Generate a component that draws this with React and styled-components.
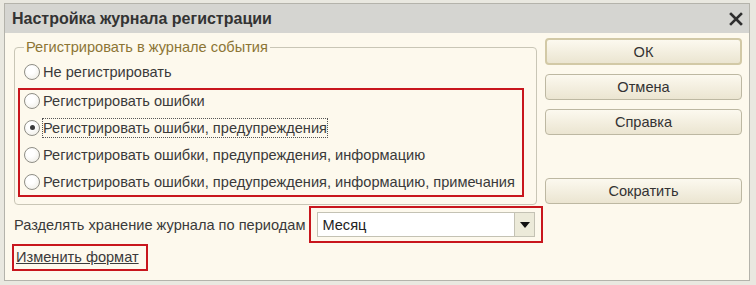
import React, { useState } from 'react';
import styled, { createGlobalStyle } from 'styled-components';

const GlobalStyle = createGlobalStyle`
  html, body {
    margin: 0;
    padding: 0;
    background: #e9e8e0;
  }
  body {
    font-family: "Liberation Sans", Arial, sans-serif;
  }
`;

const Frame = styled.div`
  width: 756px;
  height: 285px;
  box-sizing: border-box;
  padding: 3px 6px 4px 4px;
  background: #e9e8e0;
`;

const Win = styled.div`
  height: 100%;
  box-sizing: border-box;
  border: 1px solid #b4b3ab;
  background: #fdf9ed;
  display: flex;
  flex-direction: column;
`;

const TitleBar = styled.div`
  height: 29px;
  flex: none;
  display: flex;
  align-items: center;
  justify-content: space-between;
  padding: 0 6px 0 7px;
  background: #d5d5d1;
  color: #333;
  font-size: 16px;
  font-weight: bold;
`;

const CloseBtn = styled.div`
  width: 14px;
  height: 14px;
  display: flex;
`;

const Content = styled.div`
  flex: 1;
  display: flex;
  padding: 6px 0 0 9px;
  gap: 8px;
`;

const LeftCol = styled.div`
  width: 523px;
  display: flex;
  flex-direction: column;
  align-items: flex-start;
`;

const Group = styled.fieldset`
  align-self: stretch;
  margin: 0;
  padding: 0 12px 7px 5px;
  border: 1px solid #c9c6b6;
  border-radius: 4px;
`;

const Legend = styled.legend`
  margin-left: 4px;
  padding: 0 2px;
  color: #8c7535;
  font-size: 14.6px;
`;

const Highlight = styled.div`
  border: 2px solid #c8161d;
  margin: ${p => p.$margin || '0'};
  padding: ${p => p.$pad || '0'};
`;

const RowList = styled.div`
  margin-top: -3px;
`;

const Row = styled.label`
  height: ${p => p.$h || 27}px;
  margin-top: ${p => p.$top || 0}px;
  display: flex;
  align-items: center;
  padding-left: 4px;
  gap: 2px;
  color: #3a3a3a;
  font-size: 14.6px;
  white-space: nowrap;
  cursor: default;
`;

const Circle = styled.span`
  width: 14px;
  height: 14px;
  border-radius: 50%;
  border: 1px solid #8f8e86;
  background: radial-gradient(circle at 40% 35%, #ffffff 30%, #ebe9e0 100%);
  display: flex;
  align-items: center;
  justify-content: center;
  flex: none;
  &::after {
    content: '';
    width: 5px;
    height: 5px;
    border-radius: 50%;
    background: ${p => (p.$on ? '#3a3a3a' : 'transparent')};
  }
`;

const RowText = styled.span`
  padding: 1px 0;
  border: 1px dotted ${p => (p.$focus ? '#555' : 'transparent')};
`;

const PeriodRow = styled.div`
  display: flex;
  align-items: center;
  margin-top: 1px;
  gap: 4px;
  color: #3a3a3a;
  font-size: 14.6px;
  white-space: nowrap;
`;

const Select = styled.div`
  width: 218px;
  height: 25px;
  box-sizing: border-box;
  border: 1px solid #c4c2b4;
  background: #fff;
  display: flex;
  align-items: center;
  color: #222;
  font-size: 14.6px;
`;

const SelectValue = styled.span`
  flex: 1;
  padding-left: 4px;
`;

const DropBtn = styled.span`
  width: 19px;
  height: 100%;
  border-left: 1px solid #c4c2b4;
  background: #ecead9;
  display: flex;
  align-items: center;
  justify-content: center;
`;

const Link = styled.a`
  display: block;
  line-height: 17px;
  color: #3a3a3a;
  font-size: 14.6px;
  text-decoration: underline;
`;

const RightCol = styled.div`
  width: 197px;
  margin-top: -1px;
  display: flex;
  flex-direction: column;
  gap: 9px;
`;

const Button = styled.button`
  height: ${p => (p.$default ? 27 : 26)}px;
  box-sizing: border-box;
  border: ${p => (p.$default ? '2px solid #d2c9a6' : '1px solid #bdb8a2')};
  border-radius: 4px;
  background: linear-gradient(#fcf9ef, #ebe5d1);
  color: #333;
  font-family: "Liberation Sans", Arial, sans-serif;
  font-size: 14.6px;
  margin-top: ${p => p.$gapTop || 0}px;
  padding: 0;
`;

const options = [
  'Не регистрировать',
  'Регистрировать ошибки',
  'Регистрировать ошибки, предупреждения',
  'Регистрировать ошибки, предупреждения, информацию',
  'Регистрировать ошибки, предупреждения, информацию, примечания',
];

export default function App() {
  const [level, setLevel] = useState(2);

  const renderRow = (text, i, h, top) => (
    <Row key={i} $h={h} $top={top} onClick={() => setLevel(i)}>
      <Circle $on={level === i} />
      <RowText $focus={level === i}>{text}</RowText>
    </Row>
  );

  return (
    <>
      <GlobalStyle />
      <Frame>
        <Win>
          <TitleBar>
            Настройка журнала регистрации
            <CloseBtn>
              <svg width="14" height="14" viewBox="0 0 14 14">
                <path d="M2 2 L12 12 M12 2 L2 12" stroke="#2e2e2e" strokeWidth="2.6" strokeLinecap="square" />
              </svg>
            </CloseBtn>
          </TitleBar>
          <Content>
            <LeftCol>
              <Group>
                <Legend>Регистрировать в журнале события</Legend>
                {renderRow(options[0], 0, 28, 3)}
                <Highlight $margin="2px 0 0 -2px">
                  <RowList>
                    {options.slice(1).map((t, i) => renderRow(t, i + 1, 27))}
                  </RowList>
                </Highlight>
              </Group>
              <PeriodRow>
                Разделять хранение журнала по периодам
                <Highlight $pad="4px 6px">
                  <Select>
                    <SelectValue>Месяц</SelectValue>
                    <DropBtn>
                      <svg width="10" height="6" viewBox="0 0 10 6">
                        <path d="M0 0 H10 L5 6 Z" fill="#111" />
                      </svg>
                    </DropBtn>
                  </Select>
                </Highlight>
              </PeriodRow>
              <Highlight $margin="1px 0 0 -2px" $pad="3px 7px 3px 2px">
                <Link>Изменить формат</Link>
              </Highlight>
            </LeftCol>
            <RightCol>
              <Button $default>ОК</Button>
              <Button>Отмена</Button>
              <Button>Справка</Button>
              <Button $gapTop={34}>Сократить</Button>
            </RightCol>
          </Content>
        </Win>
      </Frame>
    </>
  );
}
